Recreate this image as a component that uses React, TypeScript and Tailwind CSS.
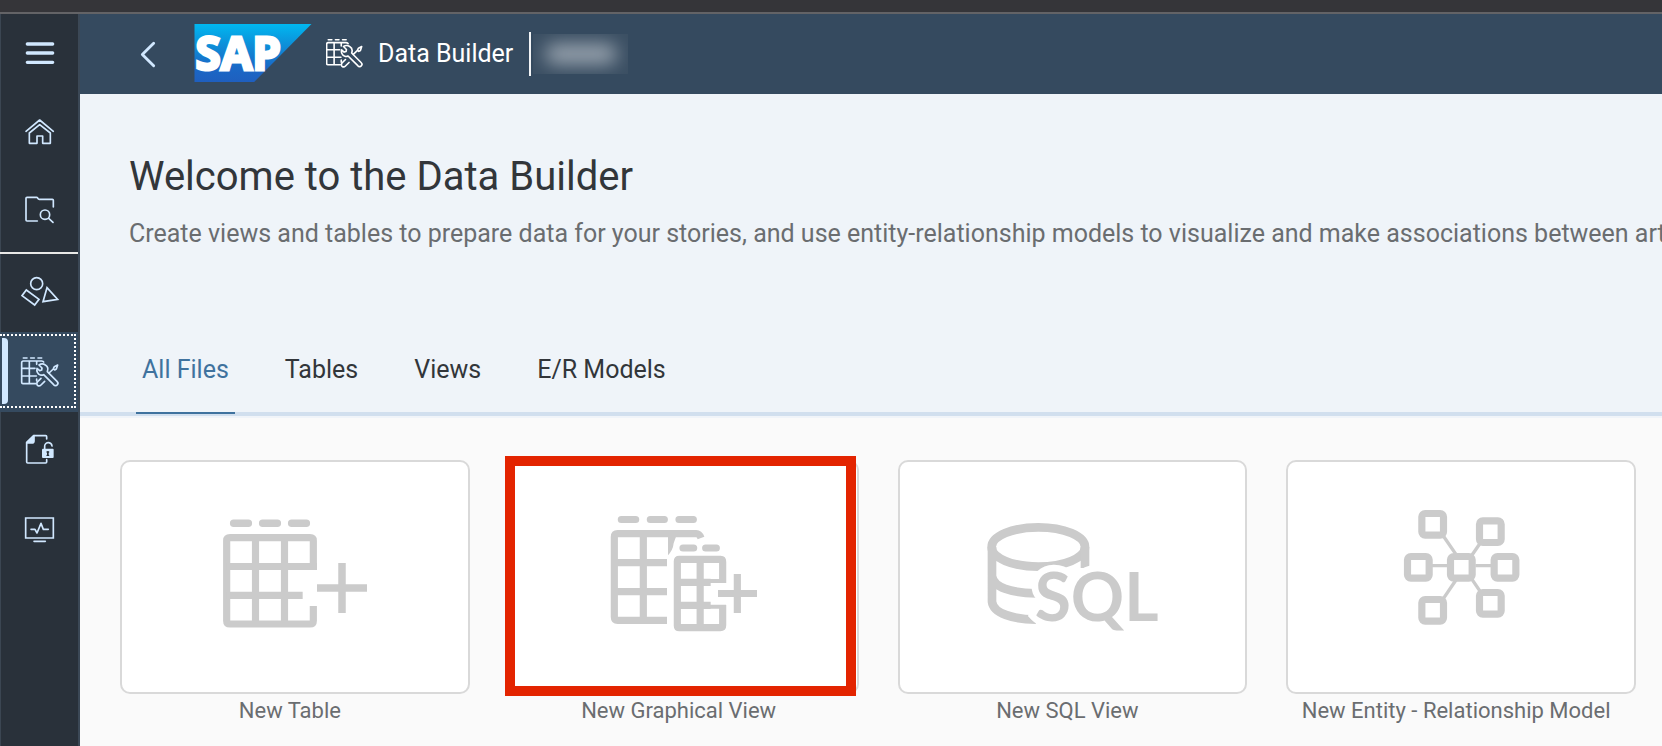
import type { ReactNode } from "react";

function DataBuilderGlyph() {
  return (
    <g fill="none" stroke="currentColor" strokeWidth="5" strokeLinecap="round" strokeLinejoin="round">
      <path d="M7 3H18M29 3H40M51 3H62" />
      <path d="M44 80H6q-4 0-4-4V17q0-5 5-5H62q5 0 6 3M25 12V80M47 12V22M2 34H42M2 57H46M47 66V72" />
      <path d="M54 24L63 33L62 39L56 41L48 34C46 42 50 52 58 54C62 55 66 54 68 53L98 83C101 87 106 87 109 83C112 80 111 76 108 73L79 44C82 36 80 28 73 24C67 20 60 20 54 24Z" />
      <path d="M60 64L50 74C46 78 47 84 51 86C55 88 58 86 60 84L71 73M84 48L97 36M110 24L100 29L97 35L101 39L106 36Z" />
    </g>
  );
}

function SideGlyph({ viewBox, children }: { viewBox: string; children: ReactNode }) {
  return (
    <svg
      viewBox={viewBox}
      className="size-12"
      fill="none"
      stroke="currentColor"
      strokeWidth="5"
      strokeLinecap="round"
      strokeLinejoin="round"
      aria-hidden="true"
    >
      {children}
    </svg>
  );
}

type NavItem = { label: string; icon: ReactNode; active?: boolean; short?: boolean; divided?: boolean };

const navItems: NavItem[] = [
  {
    label: "Expand navigation",
    icon: (
      <SideGlyph viewBox="45 90 144 144">
        <path d="M82 132H158M82 159H158M82 187H158" strokeWidth="10" />
      </SideGlyph>
    ),
  },
  {
    label: "Home",
    icon: (
      <SideGlyph viewBox="45 330 144 144">
        <path d="M78 394L119 360L160 394M88 399L119 374L151 399V430H128V408H111V430H88Z" />
      </SideGlyph>
    ),
  },
  {
    label: "Repository Explorer",
    short: true,
    divided: true,
    icon: (
      <SideGlyph viewBox="45 567 144 144">
        <path d="M112 663H81q-3 0-3-3V595q0-3 3-3H110q3 0 4 4q1 2 4 2H157q3 0 3 3V621" />
        <circle cx="135" cy="644" r="14" />
        <path d="M146 655L159 667" />
      </SideGlyph>
    ),
  },
  {
    label: "Business Builder",
    short: true,
    icon: (
      <SideGlyph viewBox="45 87 144 144">
        <circle cx="110" cy="131" r="18" />
        <path d="M79 150L117 178L104 195L66 167ZM141 143L173 178L129 185Z" strokeLinejoin="miter" />
      </SideGlyph>
    ),
  },
  {
    label: "Data Builder",
    active: true,
    icon: (
      <SideGlyph viewBox="-18 -27 144 144">
        <DataBuilderGlyph />
      </SideGlyph>
    ),
  },
  {
    label: "Data Access Controls",
    icon: (
      <SideGlyph viewBox="45 564 144 144">
        <path d="M140 597V590q0-3-3-3H101L80 607V666q0 3 3 3H137q3 0 3-3V659" />
        <path d="M102 587V603q0 6-6 6H80Z" fill="currentColor" />
        <path d="M134 626V620a10 10 0 0 1 22-2" strokeWidth="5" />
        <rect x="126" y="626" width="35" height="28" rx="3" fill="currentColor" stroke="none" />
        <path d="M143.500 636V645" stroke="#29313a" strokeWidth="5" />
        <path d="M141 636H146M141 646H146" stroke="#29313a" strokeWidth="4" />
      </SideGlyph>
    ),
  },
  {
    label: "Data Integration Monitor",
    icon: (
      <SideGlyph viewBox="45 804 144 144">
        <path d="M77 834H160V894H77Z" strokeLinejoin="miter" />
        <path d="M93 868H105L111 879L123 850L130 868H145M102 904H136" />
      </SideGlyph>
    ),
  },
];

function SideNav() {
  return (
    <nav
      aria-label="Main"
      className="flex w-20 shrink-0 flex-col border-r-2 border-[#3b4856] bg-[#29313a] text-[#d1e8ff] shadow-[inset_1px_0_0_#3b4652]"
    >
      {navItems.map((item) => (
        <button
          key={item.label}
          type="button"
          aria-label={item.label}
          className={`relative flex shrink-0 items-center justify-center ${
            item.short ? (item.divided ? "h-20 border-b-2 border-[#e8e8e6]" : "h-[78px]") : "h-20"
          } ${item.active ? "bg-[#354a5f]" : ""}`}
        >
          {item.active && (
            <>
              <span className="absolute top-0.5 right-0.5 bottom-1 left-0 border-2 border-l-0 border-dotted border-white" />
              <span className="absolute top-1.5 bottom-2 left-0.5 w-1.5 rounded-r-sm bg-[#d1e8ff]" />
            </>
          )}
          {item.icon}
        </button>
      ))}
    </nav>
  );
}

function SapLogo() {
  return (
    <svg viewBox="583 73 351 174" className="mb-0.5 h-[58px] w-[118px]" role="img" aria-label="SAP">
      <defs>
        <linearGradient id="sap-blue" x1="0" y1="0" x2="0" y2="1">
          <stop offset="0" stopColor="#00b8f1" />
          <stop offset="0.35" stopColor="#0d90d9" />
          <stop offset="0.75" stopColor="#1a68c6" />
          <stop offset="1" stopColor="#1f5fbf" />
        </linearGradient>
      </defs>
      <path d="M583 73H934L762 247H583Z" fill="url(#sap-blue)" />
      <text
        x="586"
        y="211"
        fontSize="137"
        fontWeight="700"
        fill="#fff"
        stroke="#fff"
        strokeWidth="9"
        className="font-['Open_Sans',sans-serif]"
      >
        SAP
      </text>
    </svg>
  );
}

function ShellHeader() {
  return (
    <header className="flex h-20 shrink-0 items-center bg-[#354a5f] pl-[60px] text-white">
      <button type="button" aria-label="Back" className="mr-[38px] text-[#d1e8ff]">
        <svg viewBox="420 120 48 80" className="h-[27px] w-4" fill="none" aria-hidden="true">
          <path d="M461 126L427 160L461 194" stroke="currentColor" strokeWidth="8.500" strokeLinecap="round" strokeLinejoin="round" />
        </svg>
      </button>
      <SapLogo />
      <svg viewBox="0 -10 114 117" className="mr-[15px] ml-[14px] h-[39px] w-[37px]" aria-hidden="true">
        <DataBuilderGlyph />
      </svg>
      <span className="text-[25px] leading-8">Data Builder</span>
      <span className="ml-4 h-11 w-0.5 bg-[#f2f4f6]" />
      <span className="ml-0.5 flex h-10 w-[95px] items-center justify-center overflow-hidden bg-[#3b4f63]">
        <span className="h-5 w-[72px] rounded-full bg-[#9aa5b0] blur-[9px]" />
      </span>
    </header>
  );
}

const tabs = ["All Files", "Tables", "Views", "E/R Models"];

function Intro() {
  return (
    <section className="border-b-4 border-[#d1dfee] bg-[#eff4f9] pt-[59px] pl-[49px]">
      <h1 className="text-[40px] leading-[48px] whitespace-nowrap text-[#32363a]">Welcome to the Data Builder</h1>
      <p className="mt-[17px] text-[25px] leading-8 whitespace-nowrap text-[#6a6d70]">
        Create views and tables to prepare data for your stories, and use entity-relationship models to visualize and
        make associations between artifacts.
      </p>
      <div role="tablist" className="mt-[104px] -mb-0.5 ml-[7px] flex gap-11">
        {tabs.map((tab, i) => (
          <button
            key={tab}
            type="button"
            role="tab"
            aria-selected={i === 0}
            className={`border-b-2 px-1.5 pb-[26px] text-[25px] leading-8 whitespace-nowrap ${
              i === 0 ? "border-[#3f729e] text-[#3f729e]" : "border-transparent text-[#32363a]"
            }`}
          >
            {tab}
          </button>
        ))}
      </div>
    </section>
  );
}

const tableIcon = (
  <svg viewBox="285 171 540 420" className="h-[140px] w-[180px]" fill="none" stroke="#cbcbcb" strokeWidth="21.500" aria-hidden="true">
    <path d="M371 219.500H415M458 219.500H502M545 219.500H589" strokeLinecap="round" strokeWidth="22.500" />
    <path d="M610 360V272q0-9-10-9H360q-10 0-10 9V512q0 10 10 10H600q10 0 10-10V468" />
    <path d="M436.500 262V522M523.500 262V522M350 349.500H621M350 436H578" />
    <path d="M621 414H771M696 339V489" strokeWidth="22.500" />
  </svg>
);

const graphicalViewIcon = (
  <svg viewBox="297 171 540 420" className="h-[140px] w-[180px]" fill="none" stroke="#cbcbcb" strokeWidth="21.500" aria-hidden="true">
    <path d="M379 208.500H422M466 208.500H508M552 208.500H595M564 294H596M632 294H664" strokeLinecap="round" />
    <path d="M516 511H368q-10 0-10-10V261q0-10 10-10H604q9 0 14 13M445 251V511M358 338H516M358 425H516" />
    <path d="M519 255H545Q540 268 536 280Q534 300 519 316Z" fill="#cbcbcb" stroke="none" />
    <path d="M683 399V336q0-8-6-8H553q-6 0-6 6V527q0 6 6 6H676q7 0 7-7V465" />
    <path d="M615.500 328V533M547 397H647M547 466H647" />
    <path d="M640 393H693M640 470H693" strokeWidth="12" />
    <path d="M669 430.500H786M727 372V489" />
  </svg>
);

const sqlViewIcon = (
  <svg viewBox="278 171 540 420" className="h-[140px] w-[180px]" fill="none" stroke="#cbcbcb" strokeWidth="26" aria-hidden="true">
    <ellipse cx="447" cy="291" rx="140" ry="59" />
    <path d="M308 291V455C312 490 370 508 440 509M308 378C312 412 365 429 440 430M587 291V354" />
    <text
      x="436"
      y="514"
      fontSize="198"
      fontWeight="700"
      fill="#cbcbcb"
      stroke="#fff"
      strokeWidth="40"
      className="font-[Lato,sans-serif] [paint-order:stroke]"
    >
      SQL
    </text>
  </svg>
);

const modelNodes = [
  [482, 223],
  [655, 245],
  [439, 352],
  [568, 352],
  [699, 352],
  [482, 481],
  [655, 460],
];

const modelIcon = (
  <svg viewBox="297 171 540 420" className="h-[140px] w-[180px]" fill="none" stroke="#cbcbcb" aria-hidden="true">
    <path
      d="M514 258L552 313M627 276L598 318M480 347H528M610 347H658M552 390L514 446M600 388L627 428"
      strokeWidth="10"
    />
    {modelNodes.map(([cx, cy]) => (
      <rect key={`${cx}-${cy}`} x={cx - 32.5} y={cy - 32.5} width="65" height="65" rx="10" strokeWidth="21.500" fill="#fff" />
    ))}
  </svg>
);

const tiles = [
  { label: "New Table", icon: tableIcon },
  { label: "New Graphical View", icon: graphicalViewIcon, marked: true },
  { label: "New SQL View", icon: sqlViewIcon },
  { label: "New Entity - Relationship Model", icon: modelIcon },
];

function CreateTiles() {
  return (
    <section className="grid flex-1 grid-cols-4 content-start gap-[39px] border-t-2 border-[#f0f4f9] bg-[#fafafa] pt-[42px] pr-[26px] pl-10">
      {tiles.map((tile) => (
        <button key={tile.label} type="button" className="relative flex flex-col items-stretch gap-[3px]">
          <span className="relative flex h-[234px] items-center justify-center rounded-[10px] border-2 border-[#d9d9d9] bg-white">
            {tile.icon}
            {tile.marked && <span className="absolute -top-1.5 right-px -bottom-1 -left-1.5 border-[10px] border-[#e32400]" />}
          </span>
          <span className="pr-2.5 text-center text-[22px] leading-7 whitespace-nowrap text-[#6a6d70]">{tile.label}</span>
        </button>
      ))}
    </section>
  );
}

export default function App() {
  return (
    <div className="flex min-h-screen flex-col bg-[#fafafa] font-[Roboto,sans-serif]">
      <div className="h-3.5 shrink-0 border-b-2 border-[#636366] bg-[#353539]" />
      <div className="flex flex-1">
        <SideNav />
        <main className="flex min-w-0 flex-1 flex-col overflow-hidden">
          <ShellHeader />
          <Intro />
          <CreateTiles />
        </main>
      </div>
    </div>
  );
}
